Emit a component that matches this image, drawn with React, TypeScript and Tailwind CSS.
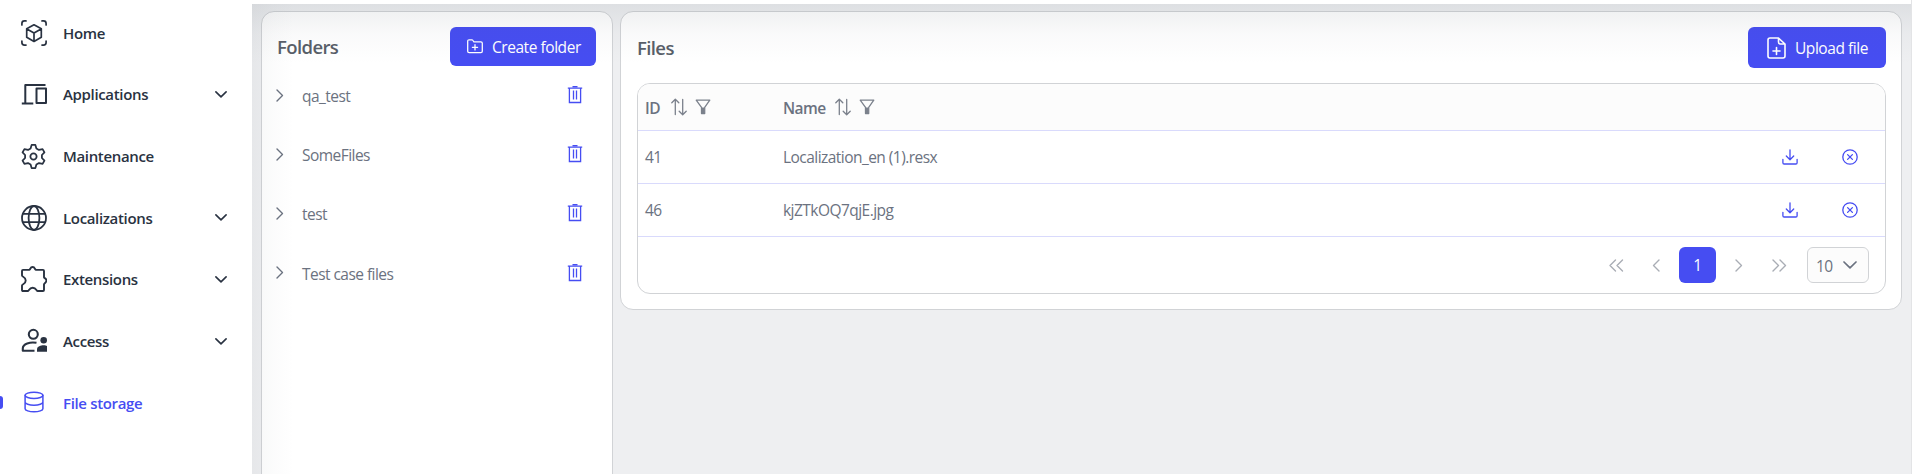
import React from 'react';

const S = ({ children, w = 26, h = 26, vb, sw = 1.6, className = '' }: { children: React.ReactNode; w?: number; h?: number; vb?: string; sw?: number; className?: string }) => (
  <svg width={w} height={h} viewBox={vb ?? `0 0 ${w} ${h}`} fill="none" stroke="currentColor" strokeWidth={sw} strokeLinecap="round" strokeLinejoin="round" className={`block shrink-0 ${className}`}>
    {children}
  </svg>
);

const HomeIcon = () => (
  <S sw={1.7}>
    <path d="M.9 5V3.500Q.9 .9 3.500 .9H5M21 .9h1.500q2.600 0 2.600 2.600v1.500M25.1 21v1.500q0 2.600-2.600 2.600h-1.500M5 25.1H3.500Q.9 25.1.9 22.500v-1.500" />
    <path d="M13 4.8l7.3 4v8.4L13 21.4l-7.3-4.2V8.8zM5.9 9l7.1 4.1L20.1 9M13 13.1v8" />
  </S>
);
const DevicesIcon = () => (
  <S sw={2}>
    <path d="M24.500 3.9H4.300v18.2M.8 22.500h11.500" strokeLinecap="butt" />
    <path d="M15.500 7.600h9.500v14.500h-9.500z" />
  </S>
);
const GearIcon = () => (
  <S vb="-12 -12 24 24" sw={1.7} w={25} h={25}>
    <path d="M-2.800-7.700L-1.800-11.100H1.800L2.800-7.700L5.270-6.270L8.710-7.110L10.510-3.990L8.070-1.430V1.430L10.510 3.990L8.710 7.110L5.270 6.270L2.800 7.700L1.800 11.100H-1.800L-2.800 7.700L-5.270 6.270L-8.710 7.110L-10.510 3.990L-8.070 1.430V-1.430L-10.510-3.990L-8.710-7.110L-5.270-6.270Z" />
    <circle cx="0" cy="0" r="3" />
  </S>
);
const GlobeIcon = () => (
  <S sw={1.8}>
    <circle cx="13" cy="13" r="12" />
    <ellipse cx="13" cy="13" rx="5.4" ry="12" />
    <path d="M1.8 8.8h22.4M1.8 17.2h22.4" />
  </S>
);
const PuzzleIcon = () => (
  <S sw={1.9}>
    <path d="M2 3.9h6.3c.9 0 .9-2.9 3.3-2.9s2.400 2.900 3.300 2.900H22q1 0 1 1v6.300c0 1 2.400.9 2.400 3.300S23 17.300 23 18.300V24q0 1-1 1h-5.300c-1.400 0-1.300-3.300-5-3.300S8.100 25 6.700 25H2q-1 0-1-1v-4.500c0-1.400 3.700-1.200 3.700-5S1 11 1 9.600V4.900q0-1 1-1z" />
  </S>
);
const UsersIcon = () => (
  <S sw={2.100}>
    <circle cx="12.300" cy="6.300" r="4.500" />
    <path d="M15.500 14.800C9 13.700 1.800 15.800 1.800 20.300V22.700H13.500" strokeLinecap="butt" />
    <circle cx="22.700" cy="12.200" r="3.300" fill="currentColor" stroke="none" />
    <path d="M16 23.700v-2.500c0-3 4-4 6.500-4 1.600 0 2.700.3 3.500.7V23.700z" fill="currentColor" stroke="none" />
  </S>
);
const DatabaseIcon = () => (
  <S sw={1.5}>
    <ellipse cx="13" cy="5.300" rx="8.900" ry="3.100" />
    <path d="M4.100 5.300v13.400c0 1.700 4 3.100 8.900 3.100s8.900-1.400 8.900-3.100V5.300M4.100 12c0 1.700 4 3.200 8.900 3.200s8.900-1.500 8.900-3.200" />
  </S>
);
const TrashIcon = () => (
  <S w={16} h={18} sw={1.300}>
    <path d="M.8 2.100h14.400M2.400 2.100v14.400h11.200V2.100M5.500.7h5M6.500 4.600v9M9.500 4.600v9" strokeLinecap="butt" strokeLinejoin="miter" />
  </S>
);
const SortIcon = () => (
  <S w={16} h={18} sw={1.300} className="text-[#7b818c]">
    <path d="M4.300 16.500v-15M.8 4.700 4.300 1.200l3.500 3.500M11.700 1.500v15M8.200 13.300l3.500 3.500 3.500-3.500" />
  </S>
);
const FilterIcon = () => (
  <S w={16} h={16} sw={1.300} className="text-[#7b818c]">
    <path d="M1.200 1.200h13.600L9.700 8.300v6.200H6.500V8.300z" />
    <path d="M8.100 8.500v6" strokeWidth="2.500" strokeLinecap="butt" />
  </S>
);
const DownloadIcon = () => (
  <S w={16} h={16} sw={1.300}>
    <path d="M8 .8v9.700M4.300 7 8 10.700 11.700 7M.9 10.300v3.500q0 1.200 1.200 1.200h11.800q1.200 0 1.200-1.200v-3.500" />
  </S>
);
const CloseIcon = () => (
  <S w={16} h={16} sw={1.300}>
    <circle cx="8" cy="8" r="7.200" />
    <path d="M5.600 5.600l4.800 4.800M10.400 5.600l-4.800 4.800" />
  </S>
);

const nav = [
  { label: 'Home', icon: <HomeIcon /> },
  { label: 'Applications', icon: <DevicesIcon />, more: true },
  { label: 'Maintenance', icon: <GearIcon /> },
  { label: 'Localizations', icon: <GlobeIcon />, more: true },
  { label: 'Extensions', icon: <PuzzleIcon />, more: true },
  { label: 'Access', icon: <UsersIcon />, more: true },
  { label: 'File storage', icon: <DatabaseIcon />, active: true },
];
const folders = ['qa_test', 'SomeFiles', 'test', 'Test case files'];
const files = [
  { id: '41', name: 'Localization_en (1).resx' },
  { id: '46', name: 'kjZTkOQ7qjE.jpg' },
];

export default function App() {
  return (
    <div className="flex h-[474px] w-[1912px] overflow-hidden bg-white font-['Open_Sans','Noto_Sans',sans-serif] text-[15.500px] leading-5 tracking-[-0.540px] text-[#6b7280]">
      <aside className="w-[252px] shrink-0 pt-[2px]">
        {nav.map((n) => (
          <div key={n.label} className={`relative flex h-[61.670px] items-center pl-[21px] font-semibold ${n.active ? 'text-[#464df2]' : 'text-[#293241]'}`}>
            {n.active && <span className="absolute left-0 top-[24px] h-[13px] w-[3px] rounded-r-[3px] bg-[#464df2]" />}
            <span className="w-[42px] shrink-0">{n.icon}</span>
            <span className="grow text-[15px] tracking-[-0.340px]">{n.label}</span>
            {n.more && <S w={12} h={7} sw={1.600} className="mr-[25px]"><path d="M.9.9 6 5.900 11.100.9" /></S>}
          </div>
        ))}
      </aside>
      <main className="relative mt-1 flex h-[470px] w-[1659px] items-start gap-[7px] bg-[#eeeff1] pl-[9px] pt-[7px]">
        <section className="h-[480px] w-[352px] shrink-0 rounded-[13px] border border-[#d1d3d6] bg-white pl-[14px] pr-4 pt-[15px]">
          <header className="flex h-[39px] items-center justify-between pl-px">
            <h2 className="text-[18.500px] font-semibold tracking-[-0.600px] text-[#585e68]">Folders</h2>
            <button className="flex h-[39px] w-[146px] items-center rounded-[6px] bg-[#464df2] pl-[17px] text-white">
              <S w={16} h={15} sw={1.300}>
                <path d="M.7 12.300V2.200Q.7.800 2.100.800h2.700q.8 0 1.200.7l.9 1.300h7q1.400 0 1.400 1.400v8.100q0 1.400-1.400 1.400H2.100Q.7 13.700.7 12.300zM8 5.700v5.200M5.400 8.300h5.200" />
              </S>
              <span className="ml-[9px] whitespace-nowrap tracking-[-0.450px]">Create folder</span>
            </button>
          </header>
          {folders.map((f) => (
            <div key={f} className="flex h-[59.200px] items-center pb-px">
              <S w={8} h={13} sw={1.400}><path d="M1 1l5.500 5.500L1 12" /></S>
              <span className="ml-[18px] mt-[2px] grow">{f}</span>
              <span className="mr-[13px] text-[#464df2]"><TrashIcon /></span>
            </div>
          ))}
        </section>
        <section className="h-[299px] w-[1282px] shrink-0 rounded-[13px] border border-[#d1d3d6] bg-white px-4 pt-[15px]">
          <header className="flex h-[41px] items-center justify-between">
            <h2 className="text-[18.500px] font-semibold tracking-[-0.600px] text-[#585e68]">Files</h2>
            <button className="-mr-px flex h-[41px] w-[138px] items-center rounded-[6px] bg-[#464df2] pl-[19px] text-white">
              <S w={19} h={22} sw={1.600}>
                <path d="M11.500 1H3Q1 1 1 3v16q0 2 2 2h13q2 0 2-2V7zM11.500 1v4q0 2 2 2H18M9.500 10.500v7M6 14h7" />
              </S>
              <span className="ml-[9px] whitespace-nowrap tracking-[-0.450px]">Upload file</span>
            </button>
          </header>
          <div className="mt-[15px] h-[211px] w-[1249px] overflow-hidden rounded-[13px] border border-[#d1d3d6]">
            <div className="flex h-[47px] items-center border-b border-[#d9dafc] bg-[#fcfcfc] pl-[7px] font-semibold">
              <div className="flex w-[138px] items-center"><span className="w-[26px] pt-px">ID</span><SortIcon /><span className="-mt-px ml-[8px]"><FilterIcon /></span></div>
              <div className="flex items-center"><span className="w-[52px] pt-px">Name</span><SortIcon /><span className="-mt-px ml-[8px]"><FilterIcon /></span></div>
            </div>
            {files.map((f) => (
              <div key={f.id} className="flex h-[53px] items-center border-b border-[#d9dafc] pl-[7px]">
                <span className="w-[138px]">{f.id}</span>
                <span className="grow">{f.name}</span>
                <span className="mr-[44px] text-[#464df2]"><DownloadIcon /></span>
                <span className="mr-[27px] text-[#464df2]"><CloseIcon /></span>
              </div>
            ))}
            <div className="flex h-[56px] items-center justify-end pr-4">
              <span className="flex items-center text-[#a9adb5]">
                <S w={15} h={13} sw={1.400}><path d="M6.500 1 1 6.500 6.500 12M13.500 1 8 6.500l5.500 5.500" /></S>
                <S w={8} h={13} sw={1.400} className="ml-[28px]"><path d="M7 1 1.500 6.500 7 12" /></S>
              </span>
              <span className="ml-[19px] flex h-9 w-[37px] items-center justify-center rounded-[6px] bg-[#464df2] text-white">1</span>
              <span className="flex items-center text-[#a9adb5]">
                <S w={8} h={13} sw={1.400} className="ml-[19px]"><path d="M1 1l5.500 5.500L1 12" /></S>
                <S w={15} h={13} sw={1.400} className="ml-[29px]"><path d="M1 1l5.500 5.500L1 12M8 1l5.500 5.500L8 12" /></S>
              </span>
              <span className="ml-[20px] flex h-9 w-[62px] items-center rounded-[6px] border border-[#d1d3d6] bg-[#fcfcfc] pl-[8px]">
                <span className="w-[27px] pt-px">10</span>
                <S w={14} h={8} sw={1.700}><path d="M1 1l6 5.800L13 1" /></S>
              </span>
            </div>
          </div>
        </section>
        <div className="pointer-events-none absolute inset-x-0 top-0 h-[60px] bg-linear-to-b from-[#4b5560]/10 via-[#4b5560]/3 to-transparent" />
        <div className="pointer-events-none absolute inset-y-0 left-0 w-[42px] bg-linear-to-r from-[#4b5560]/5 via-[#4b5560]/2 to-transparent" />
      </main>
      <div className="w-px shrink-0 bg-[#e3e4e6]" />
    </div>
  );
}
